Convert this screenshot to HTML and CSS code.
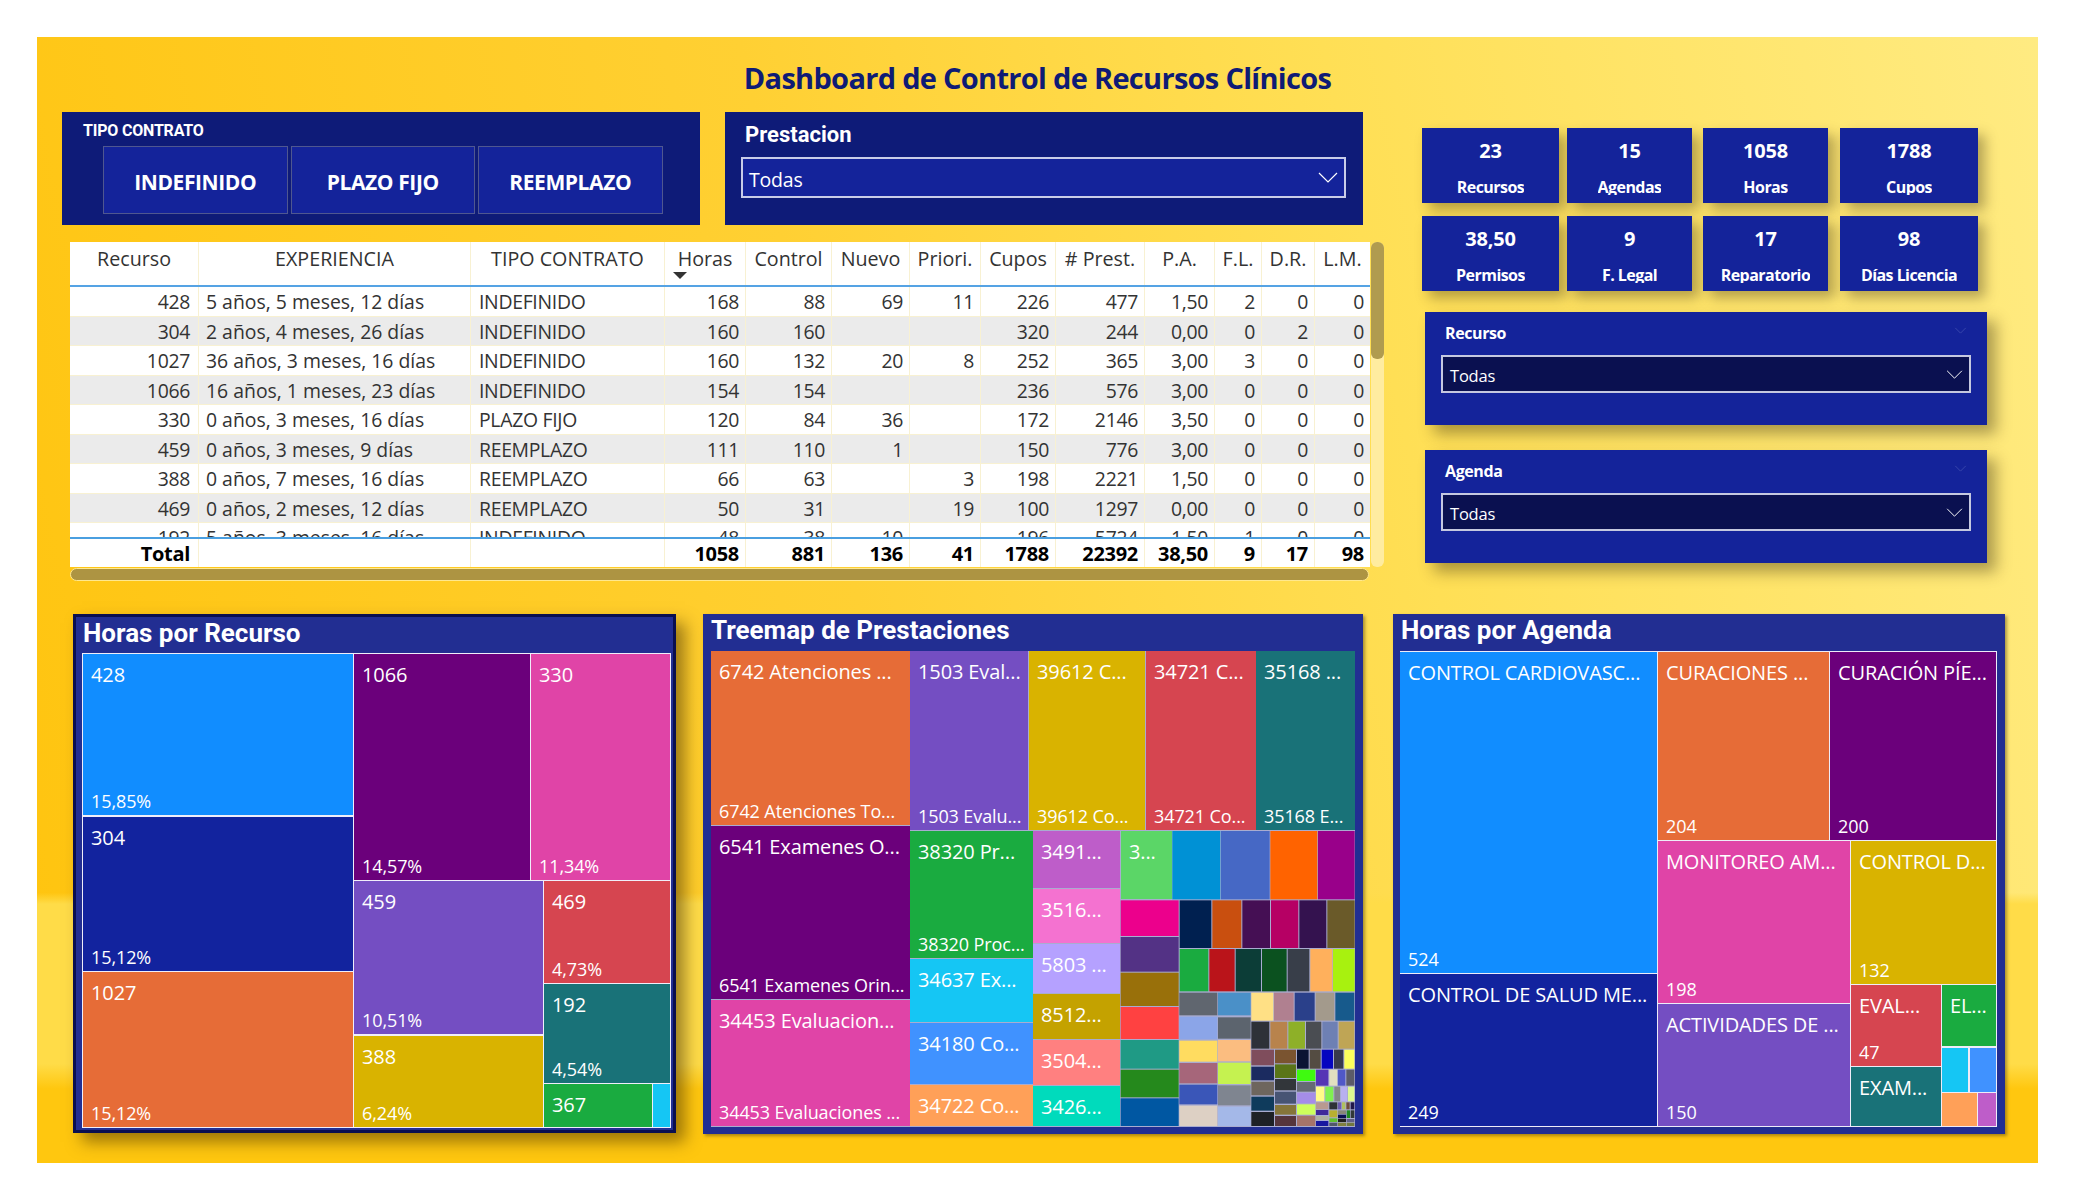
FILE: index.html
```html
<!DOCTYPE html>
<html lang="es">
<head>
<meta charset="utf-8">
<title>Dashboard de Control de Recursos Clínicos</title>
<link rel="stylesheet" href="styles.css">
</head>
<body>
<main class="canvas">
  <h1 class="title">Dashboard de Control de Recursos Clínicos</h1>
  <div class="upper">
    <div class="left">
      <div class="filters">
        <section class="panel">
          <div class="panel-cap">TIPO CONTRATO</div>
          <div class="buttons">
            <button class="chip">INDEFINIDO</button>
            <button class="chip">PLAZO FIJO</button>
            <button class="chip">REEMPLAZO</button>
          </div>
        </section>
        <section class="panel">
          <div class="panel-title">Prestacion</div>
          <div class="drop drop-main"><span>Todas</span>
            <svg class="chev" viewBox="0 0 20 11"><path d="M1 1l9 9 9-9"/></svg>
          </div>
        </section>
      </div>
      <div class="table-widget">
        <div class="table-col">
          <div class="table">
            <div class="row head">
              <span>Recurso</span><span>EXPERIENCIA</span><span>TIPO CONTRATO</span><span class="sorted">Horas</span><span>Control</span><span>Nuevo</span><span>Priori.</span><span>Cupos</span><span># Prest.</span><span>P.A.</span><span>F.L.</span><span>D.R.</span><span>L.M.</span>
            </div>
            <div class="body">
              <div class="row"><span>428</span><span>5 años, 5 meses, 12 días</span><span>INDEFINIDO</span><span>168</span><span>88</span><span>69</span><span>11</span><span>226</span><span>477</span><span>1,50</span><span>2</span><span>0</span><span>0</span></div>
              <div class="row alt"><span>304</span><span>2 años, 4 meses, 26 días</span><span>INDEFINIDO</span><span>160</span><span>160</span><span></span><span></span><span>320</span><span>244</span><span>0,00</span><span>0</span><span>2</span><span>0</span></div>
              <div class="row"><span>1027</span><span>36 años, 3 meses, 16 días</span><span>INDEFINIDO</span><span>160</span><span>132</span><span>20</span><span>8</span><span>252</span><span>365</span><span>3,00</span><span>3</span><span>0</span><span>0</span></div>
              <div class="row alt"><span>1066</span><span>16 años, 1 meses, 23 días</span><span>INDEFINIDO</span><span>154</span><span>154</span><span></span><span></span><span>236</span><span>576</span><span>3,00</span><span>0</span><span>0</span><span>0</span></div>
              <div class="row"><span>330</span><span>0 años, 3 meses, 16 días</span><span>PLAZO FIJO</span><span>120</span><span>84</span><span>36</span><span></span><span>172</span><span>2146</span><span>3,50</span><span>0</span><span>0</span><span>0</span></div>
              <div class="row alt"><span>459</span><span>0 años, 3 meses, 9 días</span><span>REEMPLAZO</span><span>111</span><span>110</span><span>1</span><span></span><span>150</span><span>776</span><span>3,00</span><span>0</span><span>0</span><span>0</span></div>
              <div class="row"><span>388</span><span>0 años, 7 meses, 16 días</span><span>REEMPLAZO</span><span>66</span><span>63</span><span></span><span>3</span><span>198</span><span>2221</span><span>1,50</span><span>0</span><span>0</span><span>0</span></div>
              <div class="row alt"><span>469</span><span>0 años, 2 meses, 12 días</span><span>REEMPLAZO</span><span>50</span><span>31</span><span></span><span>19</span><span>100</span><span>1297</span><span>0,00</span><span>0</span><span>0</span><span>0</span></div>
              <div class="row"><span>192</span><span>5 años, 3 meses, 16 días</span><span>INDEFINIDO</span><span>48</span><span>38</span><span>10</span><span></span><span>196</span><span>5724</span><span>1,50</span><span>1</span><span>0</span><span>0</span></div>
            </div>
            <div class="row total">
              <span>Total</span><span></span><span></span><span>1058</span><span>881</span><span>136</span><span>41</span><span>1788</span><span>22392</span><span>38,50</span><span>9</span><span>17</span><span>98</span>
            </div>
          </div>
          <div class="hscroll"></div>
        </div>
        <div class="vscroll"><div class="vthumb"></div></div>
      </div>
    </div>
    <aside class="right">
      <div class="kpis">
        <div class="kpi"><b>23</b><span>Recursos</span></div>
        <div class="kpi"><b>15</b><span>Agendas</span></div>
        <div class="kpi"><b>1058</b><span>Horas</span></div>
        <div class="kpi"><b>1788</b><span>Cupos</span></div>
        <div class="kpi"><b>38,50</b><span>Permisos</span></div>
        <div class="kpi"><b>9</b><span>F. Legal</span></div>
        <div class="kpi"><b>17</b><span>Reparatorio</span></div>
        <div class="kpi"><b>98</b><span>Días Licencia</span></div>
      </div>
      <section class="slicer">
        <div class="slicer-top"><span>Recurso</span><svg class="chev-dim" viewBox="0 0 14 8"><path d="M1 1l6 6 6-6"/></svg></div>
        <div class="drop drop-dark"><span>Todas</span><svg class="chev" viewBox="0 0 20 11"><path d="M1 1l9 9 9-9"/></svg></div>
      </section>
      <section class="slicer">
        <div class="slicer-top"><span>Agenda</span><svg class="chev-dim" viewBox="0 0 14 8"><path d="M1 1l6 6 6-6"/></svg></div>
        <div class="drop drop-dark"><span>Todas</span><svg class="chev" viewBox="0 0 20 11"><path d="M1 1l9 9 9-9"/></svg></div>
      </section>
    </aside>
  </div>
  <div class="charts">
    <section class="chart chart-a">
      <h2>Horas por Recurso</h2>
      <div class="treemap tm-a">
        <div class="cell c1" style="left:1px;top:1px;width:270px;height:161px"><span>428</span><small>15,85%</small></div>
        <div class="cell c2" style="left:1px;top:164px;width:270px;height:154px"><span>304</span><small>15,12%</small></div>
        <div class="cell c3" style="left:1px;top:319px;width:270px;height:155px"><span>1027</span><small>15,12%</small></div>
        <div class="cell c4" style="left:272px;top:1px;width:176px;height:226px"><span>1066</span><small>14,57%</small></div>
        <div class="cell c5" style="left:449px;top:1px;width:139px;height:226px"><span>330</span><small>11,34%</small></div>
        <div class="cell c6" style="left:272px;top:228px;width:189px;height:153px"><span>459</span><small>10,51%</small></div>
        <div class="cell c7" style="left:272px;top:383px;width:189px;height:91px"><span>388</span><small>6,24%</small></div>
        <div class="cell c8" style="left:462px;top:228px;width:126px;height:102px"><span>469</span><small>4,73%</small></div>
        <div class="cell c9" style="left:462px;top:331px;width:126px;height:99px"><span>192</span><small>4,54%</small></div>
        <div class="cell c10" style="left:462px;top:431px;width:108px;height:43px"><span>367</span></div>
        <div class="cell c11" style="left:571px;top:431px;width:17px;height:43px"></div>
      </div>
    </section>
    <section class="chart chart-b">
      <h2>Treemap de Prestaciones</h2>
      <div class="treemap tm-b">
        <div class="cell c3" style="left:0;top:0;width:199px;height:174px"><span>6742 Atenciones ...</span><small>6742 Atenciones To...</small></div>
        <div class="cell c4" style="left:0;top:175px;width:199px;height:173px"><span>6541 Examenes O...</span><small>6541 Examenes Orin...</small></div>
        <div class="cell c5" style="left:0;top:349px;width:199px;height:126px"><span>34453 Evaluacion...</span><small>34453 Evaluaciones ...</small></div>
        <div class="cell c6" style="left:199px;top:0;width:118px;height:179px"><span>1503 Eval...</span><small>1503 Evalu...</small></div>
        <div class="cell c7" style="left:318px;top:0;width:116px;height:179px"><span>39612 C...</span><small>39612 Co...</small></div>
        <div class="cell c8" style="left:435px;top:0;width:110px;height:179px"><span>34721 C...</span><small>34721 Co...</small></div>
        <div class="cell c9" style="left:545px;top:0;width:99px;height:179px"><span>35168 ...</span><small>35168 E...</small></div>
        <div class="cell c10" style="left:199px;top:180px;width:123px;height:127px"><span>38320 Pr...</span><small>38320 Proc...</small></div>
        <div class="cell c11" style="left:199px;top:308px;width:123px;height:63px"><span>34637 Ex...</span></div>
        <div class="cell c12" style="left:199px;top:372px;width:123px;height:61px"><span>34180 Co...</span></div>
        <div class="cell c13" style="left:199px;top:434px;width:123px;height:41px"><span>34722 Co...</span></div>
        <div class="cell c14" style="left:322px;top:180px;width:87px;height:57px"><span>3491...</span></div>
        <div class="cell c15" style="left:322px;top:238px;width:87px;height:54px"><span>3516...</span></div>
        <div class="cell c16" style="left:322px;top:293px;width:87px;height:49px"><span>5803 ...</span></div>
        <div class="cell c17" style="left:322px;top:343px;width:87px;height:45px"><span>8512...</span></div>
        <div class="cell c18" style="left:322px;top:389px;width:87px;height:45px"><span>3504...</span></div>
        <div class="cell c19" style="left:322px;top:435px;width:87px;height:40px"><span>3426...</span></div>
        <div class="cell c20" style="left:410px;top:180px;width:51px;height:68px"><span>3...</span></div>
        <svg class="tiny" viewBox="0 0 735 921" aria-hidden="true">
          <rect x="187" y="33" width="144" height="205" fill="#0091d5"/>
          <rect x="333" y="33" width="146" height="205" fill="#4668c5"/>
          <rect x="481" y="33" width="141" height="205" fill="#ff6300"/>
          <rect x="624" y="33" width="110" height="205" fill="#99008a"/>
          <rect x="32" y="241" width="174" height="107" fill="#ec008c"/>
          <rect x="32" y="351" width="174" height="104" fill="#533285"/>
          <rect x="32" y="458" width="174" height="100" fill="#99700a"/>
          <rect x="32" y="561" width="174" height="96" fill="#ff4141"/>
          <rect x="32" y="660" width="174" height="86" fill="#1f9a85"/>
          <rect x="32" y="749" width="174" height="83" fill="#25891c"/>
          <rect x="32" y="835" width="174" height="83" fill="#0057a2"/>
          <rect x="209" y="241" width="95" height="143" fill="#002050"/>
          <rect x="307" y="241" width="87" height="143" fill="#c94f0f"/>
          <rect x="397" y="241" width="83" height="143" fill="#450f54"/>
          <rect x="483" y="241" width="82" height="143" fill="#b60064"/>
          <rect x="568" y="241" width="81" height="143" fill="#34124f"/>
          <rect x="652" y="241" width="82" height="143" fill="#6a5a29"/>
          <rect x="209" y="387" width="86" height="127" fill="#1aab40"/>
          <rect x="298" y="387" width="76" height="127" fill="#ba141a"/>
          <rect x="377" y="387" width="76" height="127" fill="#0c3d37"/>
          <rect x="456" y="387" width="74" height="127" fill="#0b511f"/>
          <rect x="533" y="387" width="65" height="127" fill="#383e49"/>
          <rect x="601" y="387" width="66" height="127" fill="#ffb05c"/>
          <rect x="669" y="387" width="65" height="127" fill="#a8f10f"/>
          <g transform="translate(60 480)">
            <rect x="148" y="38" width="114" height="68" fill="#60666f"/>
            <rect x="148" y="110" width="114" height="68" fill="#8ba5e8"/>
            <rect x="148" y="182" width="114" height="63" fill="#ffdc60"/>
            <rect x="148" y="249" width="114" height="61" fill="#a6667a"/>
            <rect x="148" y="314" width="114" height="59" fill="#3a56b8"/>
            <rect x="148" y="377" width="114" height="61" fill="#ddd0c4"/>
            <rect x="264" y="38" width="98" height="68" fill="#4a90c8"/>
            <rect x="264" y="112" width="98" height="64" fill="#5c646e"/>
            <rect x="264" y="180" width="98" height="64" fill="#fbbd80"/>
            <rect x="264" y="248" width="98" height="64" fill="#c5f250"/>
            <rect x="264" y="316" width="98" height="60" fill="#7f8590"/>
            <rect x="264" y="380" width="98" height="58" fill="#a4b8e8"/>
            <rect x="364" y="38" width="66" height="84" fill="#ffe085"/>
            <rect x="432" y="38" width="59" height="84" fill="#b08090"/>
            <rect x="494" y="38" width="60" height="84" fill="#2a408a"/>
            <rect x="557" y="38" width="56" height="84" fill="#a39a8c"/>
            <rect x="616" y="38" width="57" height="84" fill="#175a8c"/>
            <rect x="364" y="125" width="54" height="81" fill="#2e3138"/>
            <rect x="421" y="125" width="51" height="81" fill="#b8834c"/>
            <rect x="475" y="125" width="50" height="81" fill="#8eb028"/>
            <rect x="528" y="125" width="46" height="81" fill="#4a4d52"/>
            <rect x="577" y="125" width="46" height="81" fill="#6e80b4"/>
            <rect x="626" y="125" width="47" height="81" fill="#bfa555"/>
            <rect x="364" y="209" width="68" height="47" fill="#7f4d5c"/>
            <rect x="364" y="260" width="68" height="41" fill="#1b2b60"/>
            <rect x="364" y="305" width="68" height="41" fill="#6e665e"/>
            <rect x="364" y="350" width="68" height="42" fill="#0f3b5c"/>
            <rect x="364" y="396" width="68" height="42" fill="#1e2126"/>
            <rect x="435" y="209" width="63" height="41" fill="#7a5430"/>
            <rect x="435" y="253" width="63" height="41" fill="#5a7518"/>
            <rect x="435" y="297" width="63" height="34" fill="#32363a"/>
            <rect x="435" y="335" width="63" height="36" fill="#475474"/>
            <rect x="435" y="375" width="63" height="29" fill="#85753a"/>
            <rect x="435" y="408" width="63" height="30" fill="#56353c"/>
            <rect x="501" y="209" width="35" height="57" fill="#0b1433"/>
            <rect x="539" y="209" width="33" height="57" fill="#544c42"/>
            <rect x="575" y="209" width="34" height="57" fill="#0505c0"/>
            <rect x="612" y="209" width="28" height="57" fill="#383a4d"/>
            <rect x="643" y="209" width="30" height="57" fill="#fcff5c"/>
            <rect x="501" y="269" width="55" height="34" fill="#3ffa10"/>
            <rect x="501" y="306" width="55" height="29" fill="#666a74"/>
            <rect x="501" y="338" width="55" height="32" fill="#a58de8"/>
            <rect x="501" y="373" width="55" height="31" fill="#cdff5c"/>
            <rect x="501" y="407" width="55" height="31" fill="#a5746a"/>
            <rect x="558" y="269" width="37" height="48" fill="#5535b5"/>
            <rect x="598" y="269" width="23" height="48" fill="#e2e0c0"/>
            <rect x="624" y="269" width="22" height="48" fill="#5058c8"/>
            <rect x="649" y="269" width="24" height="48" fill="#5c5c68"/>
            <rect x="558" y="320" width="25" height="44" fill="#fffb88"/>
            <rect x="586" y="320" width="24" height="44" fill="#80f050"/>
            <rect x="613" y="320" width="17" height="44" fill="#85858a"/>
            <rect x="633" y="320" width="18" height="44" fill="#b8b0f0"/>
            <rect x="654" y="320" width="19" height="44" fill="#dcf890"/>
            <rect x="558" y="367" width="37" height="21" fill="#b89a90"/>
            <rect x="598" y="367" width="24" height="21" fill="#2e3236"/>
            <rect x="624" y="367" width="10" height="21" fill="#6a5ab0"/>
            <rect x="636" y="367" width="10" height="21" fill="#b0c060"/>
            <rect x="649" y="367" width="10" height="21" fill="#704c3a"/>
            <rect x="662" y="367" width="11" height="21" fill="#201848"/>
            <rect x="558" y="390" width="37" height="15" fill="#40289a"/>
            <rect x="558" y="408" width="37" height="12" fill="#b0b0a0"/>
            <rect x="558" y="423" width="37" height="15" fill="#1818a0"/>
            <rect x="598" y="391" width="24" height="21" fill="#b8b030"/>
            <rect x="598" y="415" width="24" height="11" fill="#60c030"/>
            <rect x="598" y="428" width="24" height="10" fill="#505868"/>
            <rect x="624" y="391" width="24" height="11" fill="#888878"/>
            <rect x="624" y="404" width="24" height="10" fill="#0a1050"/>
            <rect x="624" y="416" width="24" height="10" fill="#202020"/>
            <rect x="624" y="428" width="24" height="10" fill="#808040"/>
            <rect x="650" y="391" width="10" height="23" fill="#1f8a1f"/>
            <rect x="662" y="391" width="11" height="23" fill="#303838"/>
            <rect x="650" y="417" width="23" height="9" fill="#606088"/>
            <rect x="650" y="428" width="23" height="10" fill="#707840"/>
          </g>
        </svg>
      </div>
    </section>
    <section class="chart chart-c">
      <h2>Horas por Agenda</h2>
      <div class="treemap tm-c">
        <div class="cell c1" style="left:0;top:1px;width:257px;height:321px"><span>CONTROL CARDIOVASC...</span><small>524</small></div>
        <div class="cell c2" style="left:0;top:323px;width:257px;height:152px"><span>CONTROL DE SALUD ME...</span><small>249</small></div>
        <div class="cell c3" style="left:258px;top:1px;width:171px;height:188px"><span>CURACIONES ...</span><small>204</small></div>
        <div class="cell c4" style="left:430px;top:1px;width:166px;height:188px"><span>CURACIÓN PÍE...</span><small>200</small></div>
        <div class="cell c5" style="left:258px;top:190px;width:192px;height:162px"><span>MONITOREO AM...</span><small>198</small></div>
        <div class="cell c6" style="left:258px;top:353px;width:192px;height:122px"><span>ACTIVIDADES DE ...</span><small>150</small></div>
        <div class="cell c7" style="left:451px;top:190px;width:145px;height:143px"><span>CONTROL D...</span><small>132</small></div>
        <div class="cell c8" style="left:451px;top:334px;width:90px;height:81px"><span>EVAL...</span><small>47</small></div>
        <div class="cell c9" style="left:451px;top:416px;width:90px;height:59px"><span>EXAM...</span></div>
        <div class="cell c10" style="left:542px;top:334px;width:54px;height:61px"><span>EL...</span></div>
        <div class="cell c11" style="left:542px;top:397px;width:26px;height:44px"></div>
        <div class="cell c12" style="left:570px;top:397px;width:26px;height:44px"></div>
        <div class="cell c13" style="left:542px;top:442px;width:35px;height:33px"></div>
        <div class="cell c14" style="left:578px;top:442px;width:18px;height:33px"></div>
      </div>
    </section>
  </div>
</main>
</body>
</html>
```
FILE: styles.css
```css
* { box-sizing: border-box; }
html, body { margin: 0; padding: 0; background: #fff; }
body { font-family: "Open Sans", "Liberation Sans", sans-serif; color: #fff; }

.canvas {
  width: 2001px;
  height: 1126px;
  margin: 37px 0 0 37px;
  overflow: hidden;
  background:
    linear-gradient(180deg, rgba(255,200,15,0) 91.2%, #ffc70f 93.4%),
    linear-gradient(180deg, rgba(255,220,70,0) 76%, #ffdc48 77%),
    linear-gradient(78deg, #ffc40e 0%, #ffd033 42%, #ffdf55 68%, #ffeb82 100%);
}

.title {
  height: 75px;
  margin: 0;
  padding-top: 23px;
  text-align: center;
  font: 700 29px/36px "Open Sans", sans-serif;
  letter-spacing: -0.7px;
  color: #0f1b75;
}

.upper { display: flex; height: 468px; padding-left: 25px; }
.left { width: 1347px; }
.right { width: 565px; margin-left: 13px; padding-top: 16px; }

.filters { display: flex; gap: 25px; }
.panel { width: 638px; height: 113px; background: #0e1b78; }
.panel-cap { font: 700 16px/20px Roboto, sans-serif; padding: 9px 0 0 21px; height: 34px; letter-spacing: -.2px; }
.buttons { display: flex; gap: 3px; padding-left: 41px; }
.chip {
  width: 184.5px; height: 68px; margin: 0; padding: 3px 0 0;
  border: 1px solid #4f5790; background: #14239a; color: #fff;
  font: 700 21px/26px "Open Sans", sans-serif; letter-spacing: -.4px;
}
.panel-title { font: 700 22px/28px Roboto, sans-serif; padding: 9px 0 0 20px; height: 45px; }

.drop { display: flex; align-items: center; justify-content: space-between; }
.drop-main { width: 605px; height: 41px; margin-left: 16px; border: 2px solid #c8cce8; background: #14239a; padding: 3px 6px 0 6px; font-size: 19.5px; letter-spacing: -.2px; }
.drop-main .chev { margin-top: -3px; }
.drop-dark { width: 530px; height: 38px; margin-left: 16px; border: 2px solid #c5c8e0; background: #0a1050; padding: 3px 6px 0 7px; font-size: 16.5px; letter-spacing: -.2px; }
.chev { width: 20px; height: 11px; fill: none; stroke: #fff; stroke-width: 1.2; }
.drop-dark .chev { width: 17px; height: 9px; margin-top: -3px; }

.table-widget { display: flex; margin: 17px 0 0 8px; width: 1314px; }
.table-col { width: 1300px; }
.table { background: #fff; color: #333; font-size: 19.4px; letter-spacing: -.3px; }
.row { display: grid; grid-template-columns: 129px 272px 194px 81px 86px 78px 71px 75px 89px 70px 47px 53px 55px; height: 29.55px; line-height: 29px; border-bottom: 1px solid #f8f1d2; }
.row > span { border-right: 1px solid #f8f1d2; text-align: right; padding-right: 6px; white-space: nowrap; overflow: hidden; }
.row > span:first-child { padding-right: 8px; }
.row > span:nth-child(2), .row > span:nth-child(3) { text-align: left; padding: 0 0 0 8px; }
.row > span:nth-child(2) { letter-spacing: 0; padding-left: 7px; }
.row > span:last-child { border-right: 0; }
.row.alt { background: #ebebeb; }
.row.head { height: 45px; line-height: 34px; font-size: 19.7px; border-bottom: 2px solid #55a3e4; }
.row.head > span, .row.head > span:nth-child(2), .row.head > span:nth-child(3), .row.head > span:first-child { text-align: center; padding: 0; letter-spacing: 0; }
.sorted { position: relative; }
.sorted::after { content: ""; position: absolute; left: 8px; top: 30px; border: 7px solid transparent; border-top: 7px solid #333; border-bottom: 0; }
.body { height: 250px; overflow: hidden; }
.row.total { height: 30px; border-top: 2px solid #4a9fe0; border-bottom: 0; color: #000; font-weight: 700; font-size: 20px; line-height: 29px; }

.hscroll { height: 13px; margin-top: 1px; margin-right: 1px; background: #ad9442; border: 1px solid #ffe88e; border-radius: 7px; }
.vscroll { width: 13px; height: 325px; margin-left: 1px; background: #ffeca0; border-radius: 6px; }
.vthumb { height: 117px; background: #b09b4f; border-radius: 6px; }

.kpis { display: grid; grid-template-columns: 145px 136px 137px 138px; grid-auto-rows: 75px; row-gap: 13px; width: 556px; }
.kpi { width: 137px; background: #14239a; box-shadow: 7px 7px 12px rgba(60,50,20,.38); display: flex; flex-direction: column; align-items: center; overflow: hidden; }
.kpi:nth-child(4n+2), .kpi:nth-child(4n+3) { width: 125px; }
.kpi:nth-child(4n) { width: 138px; }
.kpi b { font: 700 20px/26px "Open Sans", sans-serif; padding-top: 10px; height: 36px; letter-spacing: -.2px; }
.kpi span { font: 700 16px/22px "Open Sans", sans-serif; height: 19px; margin-top: 12px; letter-spacing: -.55px; overflow: hidden; }

.slicer { width: 562px; height: 113px; margin: 21px 0 0 3px; background: #14239a; box-shadow: 9px 9px 14px rgba(60,50,20,.42); }
.slicer + .slicer { margin-top: 25px; }
.slicer-top { display: flex; justify-content: space-between; padding: 10px 20px 0 20px; height: 43px; font: 700 16px/22px "Open Sans", sans-serif; letter-spacing: -.4px; }
.chev-dim { width: 13px; height: 7px; margin-top: 5px; fill: none; stroke: #3d4cae; stroke-width: 1; }

.charts { display: flex; padding: 34px 0 0 36px; }
.chart { background: #222e92; height: 520px; }
.chart h2 { margin: 0; font: 700 26px/30px Roboto, sans-serif; height: 37px; }
.chart-a { width: 603px; height: 519px; border: 3px solid #0a0f50; box-shadow: 9px 9px 15px rgba(60,40,0,.5); padding: 0 0 0 6px; }
.chart-a h2 { height: 36px; padding: 1px 0 0 1px; }
.chart-b { width: 660px; margin-left: 27px; padding: 0 8px; box-shadow: 2px 2px 3px rgba(90,70,20,.5); }
.chart-b h2 { padding-top: 1px; }
.chart-c { width: 612px; margin-left: 30px; padding: 0 8px 0 7px; box-shadow: 2px 2px 3px rgba(90,70,20,.5); }
.chart-c h2 { padding: 1px 0 0 1px; }

.treemap { position: relative; }
.tm-a { width: 589px; height: 475px; background: #f0eefa; }
.tm-b { width: 644px; height: 476px; background: #a9acd0; }
.tm-c { width: 597px; height: 476px; background: #eeecf8; }
.cell { position: absolute; overflow: hidden; display: flex; flex-direction: column; justify-content: space-between; padding: 8px 4px 3px 8px; white-space: nowrap; }
.cell span { font-size: 20px; line-height: 26px; letter-spacing: -.12px; }
.cell small { font-size: 18px; line-height: 22px; letter-spacing: -.1px; }
.tiny { position: absolute; left: 399px; top: 169px; width: 245px; height: 307px; }

.c1 { background: #118dff; } .c2 { background: #12239e; } .c3 { background: #e66c37; }
.c4 { background: #6b007b; } .c5 { background: #e044a7; } .c6 { background: #744ec2; }
.c7 { background: #d9b300; } .c8 { background: #d64550; } .c9 { background: #197278; }
.c10 { background: #1aab40; } .c11 { background: #15c6f4; } .c12 { background: #4092ff; }
.c13 { background: #ffa058; } .c14 { background: #be5dc9; } .c15 { background: #f472d0; }
.c16 { background: #b5a1ff; } .c17 { background: #c4a200; } .c18 { background: #ff8080; }
.c19 { background: #00dbbc; } .c20 { background: #5bd667; }
```
